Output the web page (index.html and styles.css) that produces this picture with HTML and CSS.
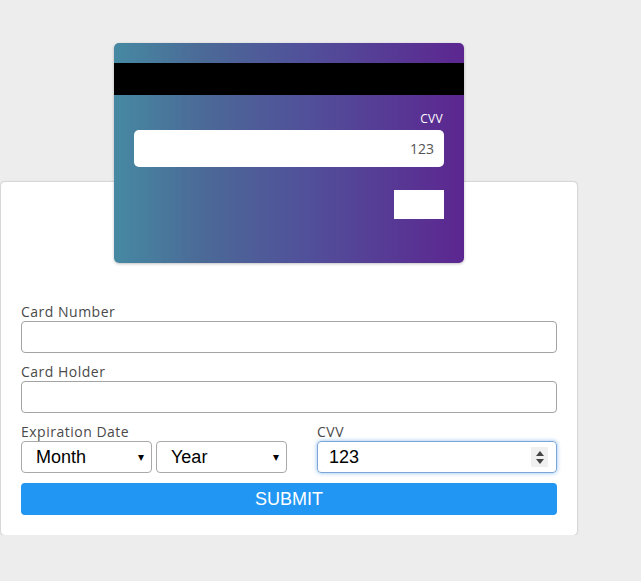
FILE: index.html
```html
<!DOCTYPE html>
<html>
<head>
<meta charset="utf-8">
<link rel="stylesheet" href="styles.css">
</head>
<body>
<div class="panel">
  <div class="card">
    <div class="stripe"></div>
    <div class="card-body">
      <div class="card-cvv-label">CVV</div>
      <div class="card-cvv-box">123</div>
      <div class="sig"></div>
    </div>
  </div>
  <form class="form">
    <div class="field">
      <label class="label">Card Number</label>
      <input class="input" type="text">
    </div>
    <div class="field">
      <label class="label">Card Holder</label>
      <input class="input" type="text">
    </div>
    <div class="row">
      <div class="col">
        <label class="label">Expiration Date</label>
        <div class="selects">
          <div class="select"><span>Month</span><span class="arrow">&#9662;</span></div>
          <div class="select"><span>Year</span><span class="arrow">&#9662;</span></div>
        </div>
      </div>
      <div class="col">
        <label class="label">CVV</label>
        <div class="cvv-input">
          <span>123</span>
          <span class="spin"><span class="up"></span><span class="down"></span></span>
        </div>
      </div>
    </div>
    <div class="submit">SUBMIT</div>
  </form>
</div>
</body>
</html>
```
FILE: styles.css
```css
* { box-sizing: border-box; }
body {
  margin: 0;
  background: #ededed;
  font-family: "Open Sans", "Liberation Sans", sans-serif;
}
.panel {
  position: relative;
  width: 576px;
  margin: 182px 0 0 1px;
  background: #fff;
  border-radius: 4px;
  box-shadow: 0 0 2px rgba(0,0,0,0.35);
  padding: 120px 20px 20px 20px;
  height: 353px;
}
.card {
  position: absolute;
  left: 113px;
  top: -139px;
  width: 350px;
  height: 220px;
  border-radius: 5px;
  background: linear-gradient(to right, #4689a2 0%, #4b6a97 25%, #51509a 55%, #5c2690 100%);
  box-shadow: 0 1px 3px rgba(0,0,0,0.25);
  padding-top: 20px;
}
.stripe {
  height: 32px;
  background: #000;
}
.card-body {
  padding: 17px 20px 0 20px;
  display: flex;
  flex-direction: column;
  align-items: flex-end;
}
.card-cvv-label {
  color: #fff;
  font-size: 12px;
  line-height: 14px;
  letter-spacing: 0.3px;
  margin-right: 1px;
}
.card-cvv-box {
  margin-top: 4px;
  width: 310px;
  height: 37px;
  background: #fff;
  border-radius: 5px;
  color: #555;
  font-size: 14px;
  text-align: right;
  padding-right: 10px;
  line-height: 37px;
}
.sig {
  margin-top: 23px;
  width: 50px;
  height: 29px;
  background: #fff;
}
.form { margin: 0; }
.field { margin-bottom: 9px; }
.label {
  display: block;
  font-size: 14px;
  color: #4a4a4a;
  letter-spacing: 0.5px;
  line-height: 20px;
  height: 19px;
}
.input {
  display: block;
  width: 536px;
  height: 32px;
  border: 1px solid #a3a3a3;
  border-radius: 4px;
  margin: 0;
  padding: 0 8px;
  font-size: 16px;
}
.row {
  display: flex;
  gap: 30px;
  margin-top: 9px;
}
.col { width: 266px; }
.col + .col { width: 240px; }
.selects { display: flex; gap: 4px; }
.select {
  width: 131px;
  height: 32px;
  border: 1px solid #a9a9a9;
  border-radius: 4px;
  display: flex;
  align-items: center;
  justify-content: space-between;
  padding: 0 7px 0 14px;
  font-family: "Liberation Sans", Arial, sans-serif;
  font-size: 18px;
  color: #000;
}
.arrow { font-size: 12px; }
.cvv-input {
  height: 32px;
  border: 1px solid #7aa7d8;
  border-radius: 4px;
  box-shadow: 0 0 4px #8fbdf0;
  display: flex;
  align-items: center;
  justify-content: space-between;
  padding: 0 8px 0 11px;
  font-family: "Liberation Sans", Arial, sans-serif;
  font-size: 18px;
  color: #000;
}
.spin {
  width: 17px;
  height: 20px;
  background: #f0f0f0;
  display: flex;
  flex-direction: column;
  align-items: center;
  justify-content: center;
  gap: 3px;
}
.up, .down {
  width: 0; height: 0;
  border-left: 4px solid transparent;
  border-right: 4px solid transparent;
}
.up { border-bottom: 5px solid #444; }
.down { border-top: 5px solid #444; }
.submit {
  margin-top: 10px;
  height: 32px;
  background: #2196f3;
  border-radius: 4px;
  color: #fff;
  text-align: center;
  line-height: 32px;
  font-family: "Liberation Sans", Arial, sans-serif;
  font-size: 18px;
}
```
